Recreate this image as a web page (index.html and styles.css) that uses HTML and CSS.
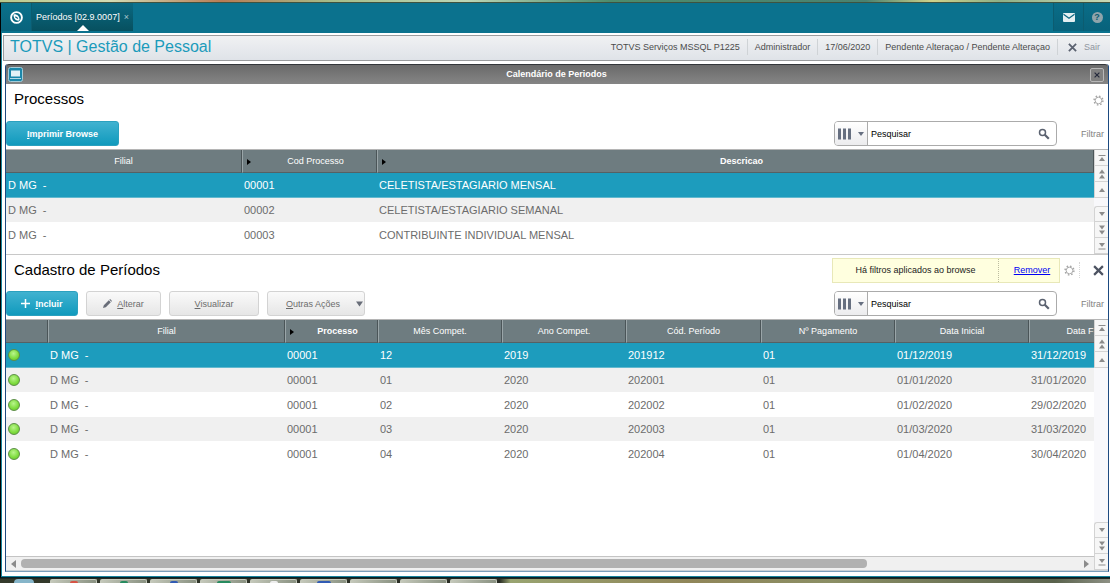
FILE: index.html
```html
<!DOCTYPE html>
<html lang="pt-BR">
<head>
<meta charset="utf-8">
<title>TOTVS | Gestão de Pessoal</title>
<link rel="stylesheet" href="styles.css">
</head>
<body>
<svg class="symbols" aria-hidden="true">
  <symbol id="gear" viewBox="0 0 12 12"><circle cx="6" cy="6" r="3.6" fill="none" stroke="#a5a5a5"/><circle cx="6" cy="6" r="4.8" fill="none" stroke="#a5a5a5" stroke-width="1.6" stroke-dasharray="1.7 2.07"/></symbol>
  <symbol id="cross" viewBox="0 0 10 10"><path d="M1 1l8 8M9 1L1 9" fill="none" stroke="currentColor" stroke-width="2"/></symbol>
  <symbol id="lens" viewBox="0 0 12 12"><circle cx="4.5" cy="4.5" r="3" fill="none" stroke="#5b6270" stroke-width="1.5"/><path d="M6.8 6.8l4 4" stroke="#5b6270" stroke-width="2.2"/></symbol>
  <symbol id="bars" viewBox="0 0 26 12"><path d="M0 .5h3v11H0zM5 .5h3v11H5zM10 .5h3v11h-3z" fill="#666f80"/><path d="M20 4h6l-3 4z" fill="#666f80"/></symbol>
  <symbol id="up" viewBox="0 0 8 10"><path d="M1 7h6L4 3z" fill="#8b8b8b"/></symbol>
  <symbol id="up-two" viewBox="0 0 8 10"><path d="M1 4.500h6L4 .5zM1 9.500h6L4 5.500z" fill="#8b8b8b"/></symbol>
  <symbol id="up-end" viewBox="0 0 8 10"><path d="M1 8h6L4 4zM.5 2h7v1h-7z" fill="#8b8b8b"/></symbol>
  <symbol id="down" viewBox="0 0 8 10"><path d="M1 3h6L4 7z" fill="#8b8b8b"/></symbol>
  <symbol id="down-two" viewBox="0 0 8 10"><path d="M1 .5h6L4 4.500zM1 5.500h6L4 9.500z" fill="#8b8b8b"/></symbol>
  <symbol id="down-end" viewBox="0 0 8 10"><path d="M1 2h6L4 6zM.5 7.500h7v1h-7z" fill="#8b8b8b"/></symbol>
</svg>

<div class="desktop-strip"></div>
<div class="app">
  <nav class="topbar">
    <button class="home" aria-label="Início"><svg width="13" height="13" viewBox="0 0 13 13"><circle cx="6.500" cy="6.500" r="5.400" fill="none" stroke="#fff" stroke-width="1.900"/><path d="M3.500 3.500C6.500 2.800 9.500 5 9.600 8.800L8.500 9.700C5.500 9.800 3.500 7.500 3.500 3.500z" fill="#fff"/><path d="M5.300 5.700l2.600 1.800" stroke="#0a657e" stroke-width="1.300"/></svg></button>
    <button class="tab">Períodos [02.9.0007] <span class="tab-close">×</span></button>
    <span class="spacer"></span>
    <button class="top-icon" aria-label="Mensagens"><svg width="12" height="9" viewBox="0 0 12 9"><rect width="12" height="9" rx="1" fill="#e4eff2"/><path d="M.5 1.200L6 5.200l5.500-4" fill="none" stroke="#0a6681" stroke-width="1.200"/></svg></button>
    <button class="top-icon help" aria-label="Ajuda"><span>?</span></button>
  </nav>

  <header class="brand-bar">
    <h1>TOTVS | Gestão de Pessoal</h1>
    <span class="info">TOTVS Serviços MSSQL P1225</span>
    <span class="info">Administrador</span>
    <span class="info">17/06/2020</span>
    <span class="info">Pendente Alteraçao / Pendente Alteraçao</span>
    <button class="info exit"><svg width="9" height="9"><use href="#cross"/></svg>Sair</button>
  </header>

  <main class="window">
    <div class="titlebar">
      <svg class="window-icon" width="15" height="15" viewBox="0 0 15 15"><rect x=".5" y=".5" width="14" height="14" rx="2" fill="#1b87aa" stroke="#a4ccd9"/><rect x="3" y="3.500" width="9" height="6" fill="#e4f2f7"/><path d="M2 11h11v1H2z" fill="#b6d9e5"/></svg>
      <h2>Calendário de Periodos</h2>
      <button class="window-close" aria-label="Fechar"><svg width="6" height="6"><use href="#cross"/></svg></button>
    </div>

    <section class="panel processes">
      <div class="panel-head">
        <h3>Processos</h3>
        <button class="icon-button" aria-label="Configurar"><svg width="11" height="11"><use href="#gear"/></svg></button>
      </div>
      <div class="toolbar">
        <button class="button primary wide"><span><u>I</u>mprimir Browse</span></button>
        <span class="spacer"></span>
        <div class="search">
          <button class="search-field" aria-label="Colunas"><svg width="26" height="12"><use href="#bars"/></svg></button>
          <input type="text" placeholder="Pesquisar" aria-label="Pesquisar processos">
          <button class="search-go" aria-label="Buscar"><svg width="12" height="12"><use href="#lens"/></svg></button>
        </div>
        <button class="filter">Filtrar</button>
      </div>
      <div class="grid">
        <div class="grid-view">
          <table>
            <colgroup><col class="c-branch-first"><col class="c-code"><col></colgroup>
            <thead><tr><th>Filial</th><th class="sorted">Cod Processo</th><th class="sorted strong">Descricao</th></tr></thead>
            <tbody>
              <tr class="selected"><td>D MG&nbsp; -</td><td>00001</td><td>CELETISTA/ESTAGIARIO MENSAL</td></tr>
              <tr><td>D MG&nbsp; -</td><td>00002</td><td>CELETISTA/ESTAGIARIO SEMANAL</td></tr>
              <tr><td>D MG&nbsp; -</td><td>00003</td><td>CONTRIBUINTE INDIVIDUAL MENSAL</td></tr>
            </tbody>
          </table>
        </div>
        <div class="vscroll">
          <button aria-label="Primeiro"><svg width="8" height="10"><use href="#up-end"/></svg></button>
          <button aria-label="Página anterior"><svg width="8" height="10"><use href="#up-two"/></svg></button>
          <button aria-label="Anterior"><svg width="8" height="10"><use href="#up"/></svg></button>
          <span class="track"></span>
          <button aria-label="Próximo"><svg width="8" height="10"><use href="#down"/></svg></button>
          <button aria-label="Próxima página"><svg width="8" height="10"><use href="#down-two"/></svg></button>
          <button aria-label="Último"><svg width="8" height="10"><use href="#down-end"/></svg></button>
        </div>
      </div>
    </section>

    <section class="panel periods">
      <div class="panel-head">
        <h3>Cadastro de Períodos</h3>
        <div class="notice"><span>Há filtros aplicados ao browse</span><a href="#">Remover</a></div>
        <button class="icon-button" aria-label="Configurar"><svg width="11" height="11"><use href="#gear"/></svg></button>
        <button class="panel-close" aria-label="Fechar painel"><svg width="11" height="11"><use href="#cross"/></svg></button>
      </div>
      <div class="toolbar">
        <button class="button primary narrow"><svg width="9" height="9" viewBox="0 0 9 9"><path d="M4.500 0v9M0 4.500h9" stroke="#fff" stroke-width="1.500"/></svg><span><u>I</u>ncluir</span></button>
        <button class="button edit"><svg width="9" height="9" viewBox="0 0 9 9"><path d="M0 9l.8-2.800 5-5 2 2-5 5zM6.400.7L7.100 0l2 2-.7.7z" fill="#686d78"/></svg><span><u>A</u>lterar</span></button>
        <button class="button view"><span><u>V</u>isualizar</span></button>
        <button class="button more"><span><u>O</u>utras Ações</span><svg width="7" height="6" viewBox="0 0 7 6"><path d="M0 .5h7l-3.500 5z" fill="#686d78"/></svg></button>
        <span class="spacer"></span>
        <div class="search">
          <button class="search-field" aria-label="Colunas"><svg width="26" height="12"><use href="#bars"/></svg></button>
          <input type="text" placeholder="Pesquisar" aria-label="Pesquisar períodos">
          <button class="search-go" aria-label="Buscar"><svg width="12" height="12"><use href="#lens"/></svg></button>
        </div>
        <button class="filter">Filtrar</button>
      </div>
      <div class="grid">
        <div class="grid-view">
          <table class="period-table">
            <colgroup><col class="c-status"><col class="c-branch"><col class="c-process"><col class="c-month"><col class="c-month"><col class="c-period"><col class="c-date"><col class="c-date"><col class="c-end"></colgroup>
            <thead><tr><th></th><th>Filial</th><th class="sorted strong">Processo</th><th>Mês Compet.</th><th>Ano Compet.</th><th>Cód. Período</th><th>Nº Pagamento</th><th>Data Inicial</th><th>Data F</th></tr></thead>
            <tbody>
              <tr class="selected"><td><i class="dot"></i></td><td>D MG&nbsp; -</td><td>00001</td><td>12</td><td>2019</td><td>201912</td><td>01</td><td>01/12/2019</td><td>31/12/2019</td></tr>
              <tr><td><i class="dot"></i></td><td>D MG&nbsp; -</td><td>00001</td><td>01</td><td>2020</td><td>202001</td><td>01</td><td>01/01/2020</td><td>31/01/2020</td></tr>
              <tr><td><i class="dot"></i></td><td>D MG&nbsp; -</td><td>00001</td><td>02</td><td>2020</td><td>202002</td><td>01</td><td>01/02/2020</td><td>29/02/2020</td></tr>
              <tr><td><i class="dot"></i></td><td>D MG&nbsp; -</td><td>00001</td><td>03</td><td>2020</td><td>202003</td><td>01</td><td>01/03/2020</td><td>31/03/2020</td></tr>
              <tr><td><i class="dot"></i></td><td>D MG&nbsp; -</td><td>00001</td><td>04</td><td>2020</td><td>202004</td><td>01</td><td>01/04/2020</td><td>30/04/2020</td></tr>
            </tbody>
          </table>
          <div class="hscroll">
            <button aria-label="Rolar à esquerda"><svg width="5" height="8" viewBox="0 0 5 8"><path d="M5 0v8L0 4z" fill="#8b8b8b"/></svg></button>
            <span class="hscroll-track"><span class="thumb"></span></span>
            <button aria-label="Rolar à direita"><svg width="5" height="8" viewBox="0 0 5 8"><path d="M0 0v8l5-4z" fill="#8b8b8b"/></svg></button>
          </div>
        </div>
        <div class="vscroll">
          <button aria-label="Primeiro"><svg width="8" height="10"><use href="#up-end"/></svg></button>
          <button aria-label="Página anterior"><svg width="8" height="10"><use href="#up-two"/></svg></button>
          <button aria-label="Anterior"><svg width="8" height="10"><use href="#up"/></svg></button>
          <span class="track"></span>
          <button aria-label="Próximo"><svg width="8" height="10"><use href="#down"/></svg></button>
          <button aria-label="Próxima página"><svg width="8" height="10"><use href="#down-two"/></svg></button>
          <button aria-label="Último"><svg width="8" height="10"><use href="#down-end"/></svg></button>
        </div>
      </div>
    </section>
  </main>
</div>
<footer class="taskbar">
  <span class="orb"></span>
  <span class="task red"></span><span class="task green"></span><span class="task blue"></span><span class="task green big"></span><span class="task white"></span><span class="task blue big"></span><span class="task"></span><span class="task"></span><span class="task"></span>
</footer>
</body>
</html>
```

FILE: styles.css
```css
* { box-sizing: border-box; }

body {
  margin: 0;
  height: 100vh;
  display: flex;
  flex-direction: column;
  overflow: hidden;
  background: #fff;
  color: #6c6c6c;
  font: 9px/12px "Liberation Sans", Arial, sans-serif;
}

h1, h2, h3 { margin: 0; }

button {
  display: flex;
  align-items: center;
  justify-content: center;
  margin: 0;
  padding: 0;
  border: 0;
  background: none;
  color: inherit;
  font: inherit;
}

svg { display: block; flex: none; }

.symbols { position: absolute; width: 0; height: 0; }

.spacer { flex: 1; }

.desktop-strip {
  flex: none;
  height: 3px;
  border-bottom: 1px solid #3f5340;
  background: linear-gradient(90deg, #b9c98d, #d2dcb4 10%, #b97c55 20%, #a5bd8a 30%, #bcd6b6 42%, #4d8c6c 55%, #4a8270 78%, #d0d28a 84%, #8db087 90%, #c9d9b5);
}

.app {
  flex: 1;
  min-height: 0;
  display: flex;
  flex-direction: column;
  border-left: 1px solid #000;
  border-bottom: 1px solid #04222b;
  box-shadow: inset 1px -1px #17839b;
}

/* Top navigation */
.topbar {
  flex: none;
  display: flex;
  height: 30px;
  padding-bottom: 2px;
  background: #0b728e;
  color: #fff;
}

.home {
  width: 31px;
  background: linear-gradient(#0a718c, #09637c);
  border-right: 1px solid #0c5c70;
}

.tab {
  position: relative;
  gap: 4px;
  width: 101px;
  background: linear-gradient(#0a6982, #07505f);
}

.tab::after {
  content: "";
  position: absolute;
  bottom: 0;
  left: 50%;
  margin-left: -6px;
  border: 6px solid transparent;
  border-top: 0;
  border-bottom-color: #fff;
}

.tab-close { color: #a6c6cf; }

.top-icon {
  width: 30px;
  background: linear-gradient(#0a6d88, #08627b);
  border-left: 1px solid #0c5c70;
}

.help { width: 27px; }

.help span {
  width: 11px;
  height: 11px;
  border-radius: 50%;
  background: #8fa4ab;
  color: #0a5a70;
  font-weight: bold;
  line-height: 11px;
}

/* Product bar */
.brand-bar {
  flex: none;
  display: flex;
  align-items: center;
  height: 26px;
  margin: 2px 0 3px 2px;
  padding: 0 0 2px 6px;
  border: 1px solid #9a9c9e;
  border-right: 0;
  background: linear-gradient(#f0f1f3, #dfe3e8);
  color: #4b4b4b;
}

.brand-bar h1 {
  flex: 1;
  color: #1b9bbb;
  font-size: 16px;
  font-weight: normal;
  line-height: 20px;
}

.info {
  padding: 2px 7px;
  border-left: 1px solid #cfd3d6;
  white-space: nowrap;
}

h1 + .info { border-left: 0; }

.exit {
  gap: 7px;
  padding-left: 10px;
  padding-right: 10px;
  color: #8f959e;
}

.exit svg { color: #5b6270; }

/* Window */
.window {
  flex: 1;
  min-height: 0;
  display: flex;
  flex-direction: column;
  margin: 0 1px 5px 4px;
  border: 1px solid #1d4a80;
  border-top: 0;
  border-bottom-color: #7b9fbc;
  border-radius: 3px 3px 0 0;
}

.titlebar {
  flex: none;
  display: flex;
  align-items: center;
  height: 20px;
  padding: 0 4px 0 2px;
  border-top: 1px solid #33363a;
  border-radius: 3px 3px 0 0;
  background: linear-gradient(#6a6a6a, #858585);
}

.titlebar h2 {
  flex: 1;
  padding-bottom: 1px;
  color: #fff;
  font-size: 9px;
  text-align: center;
}

.window-close {
  width: 14px;
  height: 14px;
  border: 1px solid #b7b7b7;
  border-radius: 2px;
  background: #808080;
  color: #252a3c;
}

/* Panels */
.panel { display: flex; flex-direction: column; }

.processes { flex: none; padding-top: 1px; }

.periods { flex: 1; min-height: 0; }

.panel-head {
  display: flex;
  align-items: center;
  height: 30px;
  margin-bottom: 6px;
  padding: 0 4px 0 8px;
}

.panel-head h3 {
  flex: 1;
  color: #000;
  font-size: 15px;
  font-weight: normal;
  line-height: 18px;
}

.processes h3 { padding-bottom: 2px; }

.notice {
  display: flex;
  height: 25px;
  margin-right: 4px;
  border: 1px solid #e8e8b8;
  background: #ffffdf;
  color: #222;
  line-height: 23px;
  text-align: center;
}

.notice span { width: 165px; }

.notice a {
  width: 61px;
  padding-left: 6px;
  border-left: 1px dotted #bcbca0;
  color: #0000f5;
}

.panel-close {
  height: 16px;
  margin-left: 4px;
  padding-left: 13px;
  border-left: 1px dotted #d5d5d5;
  color: #4d5362;
}

.toolbar {
  display: flex;
  height: 25px;
  margin-bottom: 3px;
  padding-right: 4px;
}

.button {
  gap: 5px;
  margin-right: 8px;
  border: 1px solid #d3d3d3;
  border-radius: 3px;
  background: linear-gradient(#fafafa, #e6e6e6);
}

.primary {
  border-color: #2ba1bf;
  background: linear-gradient(#41b2d0, #109abd);
  color: #fff;
  font-weight: bold;
}

.wide { width: 113px; }
.narrow { width: 72px; }
.edit { width: 75px; }
.view { width: 90px; }
.more { width: 98px; justify-content: space-between; padding: 0 1px 0 18px; }

.search {
  display: flex;
  width: 223px;
  margin-right: 24px;
  border: 1px solid #ababab;
  border-radius: 4px;
  background: #fff;
}

.search-field {
  width: 33px;
  border-right: 1px solid #ababab;
  border-radius: 3px 0 0 3px;
  background: linear-gradient(#fff, #ececee);
}

.search input {
  flex: 1;
  min-width: 0;
  padding: 0 3px;
  border: 0;
  background: none;
  color: #000;
  font: inherit;
}

.search input::placeholder { color: #000; opacity: 1; }

.search-go { width: 25px; }

.filter { color: #828282; }

/* Data grids */
.grid {
  display: flex;
  flex: 1;
  min-height: 0;
  border-top: 1px solid #b5b5b5;
}

.processes .grid { border-bottom: 1px solid #c8c8c8; }

.periods .grid { border-bottom: 1px solid #c9d0d6; }

.grid-view {
  flex: 1;
  min-width: 0;
  display: flex;
  flex-direction: column;
  overflow: hidden;
}

table {
  width: 100%;
  table-layout: fixed;
  border-collapse: separate;
  border-spacing: 0;
  font-size: 11px;
}

.period-table { min-width: 1125px; }

.c-branch-first { width: 236px; }
.c-code { width: 135px; }
.c-status { width: 42px; }
.c-branch { width: 237px; }
.c-process { width: 93px; }
.c-month { width: 124px; }
.c-period { width: 135px; }
.c-date { width: 134px; }

th {
  height: 23px;
  padding: 0 2px;
  border-left: 1px solid #9aa5a8;
  border-right: 1px solid #4b5558;
  border-bottom: 1px solid #556164;
  background: #6e7c80;
  color: #fff;
  font-size: 9px;
  font-weight: normal;
}

th:first-child { border-left: 0; }

.strong { font-weight: bold; }

.sorted {
  position: relative;
  padding-left: 14px;
}

.sorted::before {
  content: "";
  position: absolute;
  top: 9px;
  left: 4px;
  border: 3px solid transparent;
  border-left: 4px solid #000;
  border-right: 0;
}

td {
  height: 24px;
  padding: 0 2px;
  line-height: 14px;
  white-space: nowrap;
}

tbody tr:nth-child(odd) td { height: 25px; }

tbody tr:nth-child(even) { background: #f0f0f0; }

.selected td {
  border-bottom: 1px solid #62b9cf;
  background: #1d9cbd;
  color: #fff;
}

.dot {
  display: block;
  width: 12px;
  height: 12px;
  border: 1px solid #5c8f45;
  border-radius: 50%;
  background: radial-gradient(circle at 45% 35%, #b9f48c, #7ddb3c 60%, #65c02c);
}

.vscroll {
  display: flex;
  flex-direction: column;
  width: 14px;
  background: #f8f8fb;
}

.vscroll button {
  height: 16px;
  border: 1px solid #d3d3d3;
  border-width: 0 0 1px 1px;
  background: #f6f6f6;
}

.track { flex: 1; min-height: 8px; }

.track + button { border-top-width: 1px; border-radius: 3px 0 0 0; }

.hscroll {
  display: flex;
  height: 14px;
  margin-top: auto;
  border-top: 1px solid #c4c4c4;
  background: #f0f0f0;
}

.hscroll button { width: 15px; }

.hscroll-track { flex: 1; display: flex; padding: 2px 0; }

.thumb {
  width: 80%;
  border-radius: 4px;
  background: #b1b1b1;
}

/* Desktop taskbar */
.taskbar {
  flex: none;
  display: flex;
  gap: 3px;
  height: 5px;
  padding-left: 14px;
  border-top: 1px solid #222820;
  background: linear-gradient(90deg, #343a2b, #282c24 45%, #99a471 46%, #908659 62%, #8b8f65 75%, #59624c 95%, #8e9185);
}

.orb {
  width: 20px;
  margin-right: 13px;
  border-radius: 10px 10px 0 0;
  background: #86b5c9;
}

.task {
  width: 47px;
  border: 1px solid #c5c9bc;
  border-bottom: 0;
  border-radius: 2px 2px 0 0;
  background: linear-gradient(90deg, #c4c8ba, #8a9282);
}

.task::before {
  content: "";
  display: block;
  width: 8px;
  height: 2px;
  margin: 1px auto 0;
  border-radius: 4px 4px 0 0;
}

.red::before { background: #d65345; }
.green::before { background: #278b5f; }
.blue::before { background: #315bb4; }
.white::before { background: #eee; }
.big::before { width: 14px; }
```
